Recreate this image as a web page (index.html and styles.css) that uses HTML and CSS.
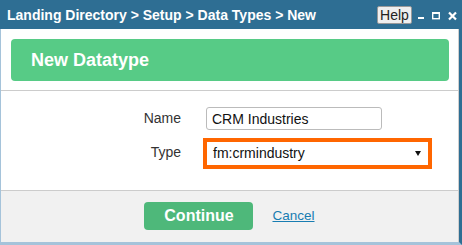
FILE: index.html
```html
<!DOCTYPE html>
<html lang="en">
<head>
    <meta charset="UTF-8">
    <meta name="viewport" content="width=device-width, initial-scale=1.0">
    <title>New Datatype</title>
    <link rel="stylesheet" href="styles.css">
</head>
<body>
    <div class="window">
        <div class="titlebar">
            <span class="title">Landing Directory &gt; Setup &gt; Data Types &gt; New</span>
            <div class="controls">
                <button class="help">Help</button>
                <svg class="ctl min" width="6" height="10" viewBox="0 0 6 10"><rect x="0" y="6" width="6" height="2" fill="#fff"/></svg>
                <svg class="ctl max" width="8" height="10" viewBox="0 0 8 10"><rect x="0.7" y="1.7" width="6.6" height="6" fill="none" stroke="#fff" stroke-width="1.4"/><rect x="0" y="1" width="8" height="2" fill="#fff"/></svg>
                <svg class="ctl close" width="9" height="10" viewBox="0 0 9 10"><path d="M1 1.5L8 8.5M8 1.5L1 8.5" stroke="#fff" stroke-width="2.2"/></svg>
            </div>
        </div>
        <div class="body">
            <div class="header">
                <div class="banner">New Datatype</div>
            </div>
            <div class="form">
                <label for="name">Name</label>
                <input type="text" id="name" value="CRM Industries">
                <label>Type</label>
                <div class="select">
                    <span>fm:crmindustry</span>
                    <svg width="6" height="5" viewBox="0 0 6 5"><path d="M0 0H6L3 5Z" fill="#111"/></svg>
                </div>
            </div>
            <div class="footer">
                <button class="continue">Continue</button>
                <a href="#" class="cancel">Cancel</a>
            </div>
        </div>
    </div>
</body>
</html>
```

FILE: styles.css
```css
body { margin: 0; font-family: "Liberation Sans", Arial, sans-serif; }
.window { width: 462px; height: 245px; box-sizing: border-box; display: flex; flex-direction: column; }

.titlebar { height: 29px; background-color: #2e6e93; display: flex; align-items: center; justify-content: space-between; padding: 0 5px 0 7px; }
.title { color: #fff; font-weight: bold; font-size: 14px; }
.controls { display: flex; align-items: center; }
.help { font-family: "Liberation Sans", Arial, sans-serif; font-size: 14px; color: #222; background-color: #efefef; border: 1px solid #9a9a9a; border-radius: 2px; height: 18px; width: 35px; padding: 0; line-height: 16px; margin-right: 6px; }
.ctl { display: block; margin-top: 3px; }
.min { margin-right: 8px; }
.max { margin-right: 8px; }

.body { flex: 1; display: flex; flex-direction: column; border-left: 1px solid #a5c3da; border-right: 3px solid #2e6e93; border-bottom: 3px solid #a5c3da; }
.header, .form, .footer { border-right: 1px solid #cfcfcf; }
.header { height: 62px; box-sizing: border-box; padding: 10px 9px 0 10px; border-bottom: 1px solid #cccccc; }
.banner { height: 42px; background-color: #57cb86; border-radius: 4px; color: #fff; font-weight: bold; font-size: 18px; line-height: 42px; padding-left: 20px; }

.form { height: 100px; box-sizing: border-box; padding-top: 16px; display: grid; grid-template-columns: 180px auto; grid-template-rows: 23px 25px; column-gap: 25px; row-gap: 11px; align-items: start; justify-content: start; border-bottom: 1px solid #cccccc; }
.form label { text-align: right; font-size: 14px; line-height: 22px; color: #333; }
.form input { box-sizing: border-box; width: 176px; height: 23px; border: 1px solid #bbbbbb; border-radius: 3px; padding: 0 5px; font-family: "Liberation Sans", Arial, sans-serif; font-size: 14px; color: #111; }
.select { box-sizing: border-box; width: 223px; height: 25px; border: 1px solid #ff6600; outline: 3px solid #ff6600; display: flex; align-items: center; justify-content: space-between; padding: 0 7px 1px 6px; font-size: 14px; color: #111; }

.footer { flex: 1; background-color: #f1f1f1; display: flex; align-items: flex-start; justify-content: center; padding-top: 11px; gap: 19px; }
.continue { width: 109px; height: 28px; background-color: #4eb87a; border: none; border-radius: 4px; color: #fff; font-family: "Liberation Sans", Arial, sans-serif; font-weight: bold; font-size: 16px; padding: 0; }
.cancel { color: #187db2; font-size: 13.5px; line-height: 28px; }
```
